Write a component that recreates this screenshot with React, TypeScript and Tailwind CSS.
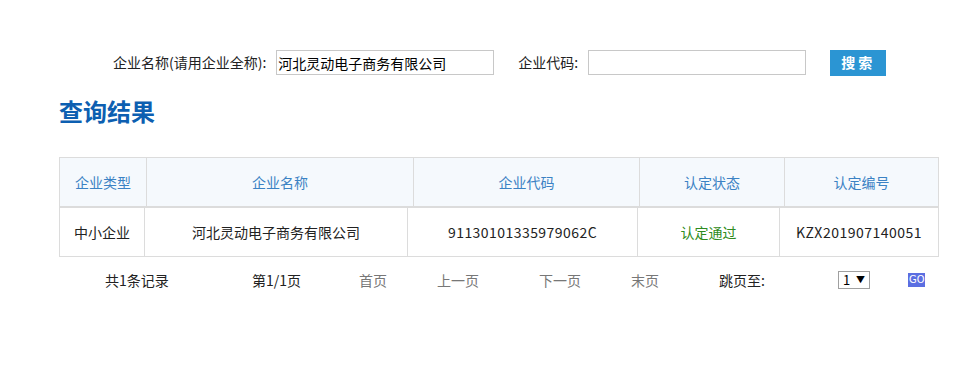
import React from "react";

const font = { fontFamily: '"Noto Sans CJK SC", "Noto Sans", sans-serif' };

export default function App() {
  return (
    <div className="w-[967px] h-[367px] bg-white text-[14px] text-[#222]" style={font}>
      {/* search bar */}
      <div className="flex items-center pt-[49px] pl-[113px] h-[76px]">
        <span>企业名称(请用企业全称):</span>
        <input
          className="ml-[10px] w-[218px] h-[25px] border border-[#c8c8c8] px-[1px] text-[14px] text-black outline-none"
          defaultValue="河北灵动电子商务有限公司"
        />
        <span className="ml-[24px]">企业代码:</span>
        <input className="ml-[10px] w-[218px] h-[25px] border border-[#c8c8c8] outline-none" />
        <button className="ml-[24px] w-[56px] h-[26px] bg-[#2b95d3] text-white font-bold tracking-[3px] text-[14px]">
          搜索
        </button>
      </div>

      {/* title */}
      <div className="pl-[59px] mt-[19px] text-[24px] font-bold text-[#0d5fb1] leading-[32px]">查询结果</div>

      {/* table */}
      <div className="ml-[59px] mt-[30px] w-[880px] border border-[#dcdcdc]">
        <div className="grid grid-cols-[87px_267px_226px_145px_1fr] h-[50px] bg-[#f5f9fd] text-[#3b82c4] border-b-2 border-[#dcdcdc]">
          <div className="flex items-center justify-center border-r border-[#dcdcdc]">企业类型</div>
          <div className="flex items-center justify-center border-r border-[#dcdcdc]">企业名称</div>
          <div className="flex items-center justify-center border-r border-[#dcdcdc]">企业代码</div>
          <div className="flex items-center justify-center border-r border-[#dcdcdc]">认定状态</div>
          <div className="flex items-center justify-center">认定编号</div>
        </div>
        <div className="grid grid-cols-[85px_263px_230px_142px_1fr] h-[48px] text-[#222]">
          <div className="flex items-center justify-center border-r border-[#dcdcdc]">中小企业</div>
          <div className="flex items-center justify-center border-r border-[#dcdcdc]">河北灵动电子商务有限公司</div>
          <div className="flex items-center justify-center border-r border-[#dcdcdc] tracking-[0.45px]">91130101335979062C</div>
          <div className="flex items-center justify-center border-r border-[#dcdcdc] text-[#2e8b20]">认定通过</div>
          <div className="flex items-center justify-center tracking-[0.5px]">KZX201907140051</div>
        </div>
      </div>

      {/* pager */}
      <div className="flex items-center h-[22px] mt-[12px] pl-[105px]">
        <span className="w-[147px]">共1条记录</span>
        <span className="w-[107px]">第1/1页</span>
        <span className="w-[78px] text-[#777]">首页</span>
        <span className="w-[102px] text-[#777]">上一页</span>
        <span className="w-[92px] text-[#777]">下一页</span>
        <span className="w-[88px] text-[#777]">末页</span>
        <span className="w-[119px]">跳页至:</span>
        <span className="w-[32px] h-[18px] border border-[#a0a0a0] flex items-center justify-between px-[4px] text-[13px] text-black">
          <span>1</span>
          <span className="text-[9px]">▼</span>
        </span>
        <span
          className="ml-[38px] h-[14px] px-[1px] bg-[#5b6ee1] text-white text-[11px] leading-[14px]"
          style={{ fontFamily: '"DejaVu Sans Condensed", "DejaVu Sans", sans-serif' }}
        >
          GO
        </span>
      </div>
    </div>
  );
}
